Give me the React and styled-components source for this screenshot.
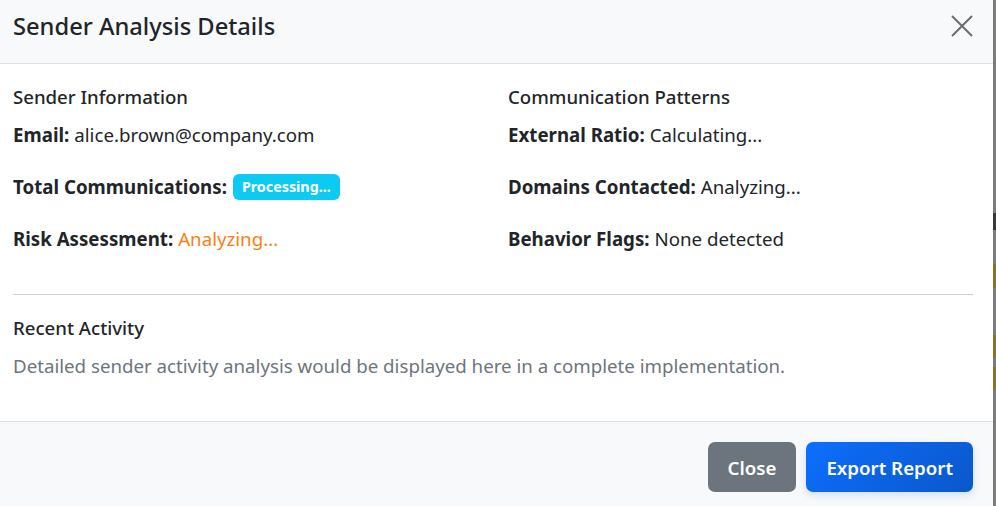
import React from 'react';
import styled, { createGlobalStyle } from 'styled-components';

const GlobalStyle = createGlobalStyle`
    html, body {
        margin: 0;
        padding: 0;
        height: 100%;
        overflow: hidden;
        background: #7a7a7a;
    }
    body {
        font-family: "Noto Sans", "Open Sans", sans-serif;
        color: #212529;
    }
    #root {
        height: 100%;
    }
`;

const Page = styled.div`
    display: flex;
    height: 506px;
`;

const Modal = styled.div`
    width: 993px;
    flex: none;
    background: #fff;
    display: flex;
    flex-direction: column;
    box-shadow: 0 8px 24px rgba(0, 0, 0, 0.2);
`;

const Backdrop = styled.div`
    flex: 1;
    background: #7b7b7b;
    display: flex;
    flex-direction: column;
    padding-top: 213px;
`;

const BackdropMark = styled.div`
    height: ${p => p.h}px;
    margin-top: ${p => p.top}px;
    background: ${p => p.color};
`;

const Header = styled.div`
    height: 64px;
    flex: none;
    display: flex;
    align-items: center;
    justify-content: space-between;
    padding: 0 20px 12px 13px;
    box-sizing: border-box;
    background: #f8f9fa;
    border-bottom: 1px solid #dee2e6;
`;

const Title = styled.h5`
    margin: 0;
    font-size: 23.7px;
    font-weight: 500;
    line-height: 28px;
    color: #212529;
`;

const CloseX = styled.button`
    border: 0;
    background: none;
    padding: 0;
    width: 22px;
    height: 22px;
    display: flex;
    align-items: center;
    justify-content: center;
    cursor: pointer;
`;

const Body = styled.div`
    padding: 21px 20px 41px 13px;
`;

const Columns = styled.div`
    display: grid;
    grid-template-columns: 1fr 1fr;
    column-gap: 30px;
`;

const SectionTitle = styled.h6`
    margin: 0 0 12px;
    font-size: 18.6px;
    font-weight: 500;
    line-height: 24px;
    color: #212529;
`;

const Row = styled.p`
    margin: 0 0 24px;
    font-size: 18.7px;
    line-height: 28px;
    display: flex;
    align-items: center;
    gap: 5px;
    &:last-child {
        margin-bottom: 0;
    }
`;

const Label = styled.strong`
    font-weight: 700;
`;

const Value = styled.span`
    color: ${p => p.color || '#212529'};
`;

const Badge = styled.span`
    display: inline-block;
    background: #0dcaf0;
    color: #fff;
    font-size: 14.3px;
    font-weight: 700;
    line-height: 26px;
    padding: 0 9px;
    border-radius: 6px;
    margin-left: 1px;
`;

const Divider = styled.hr`
    margin: 41px 0 21px;
    border: 0;
    border-top: 1px solid #cfd0d2;
`;

const Muted = styled.p`
    margin: 12px 0 0;
    font-size: 18.7px;
    line-height: 28px;
    color: #6c757d;
`;

const Footer = styled.div`
    flex: 1;
    background: #f8f9fa;
    border-top: 1px solid #dee2e6;
    display: flex;
    justify-content: flex-end;
    align-items: flex-start;
    gap: 10px;
    padding: 20px 20px 0 0;
`;

const Button = styled.button`
    height: 50px;
    border: 0;
    border-radius: 7px;
    padding: 0 20px;
    font-family: inherit;
    font-size: 18.7px;
    font-weight: 600;
    color: #fff;
    cursor: pointer;
    background: ${p => p.primary
        ? 'linear-gradient(135deg, #0d6efd 0%, #0a58ca 100%)'
        : '#6c757d'};
    box-shadow: ${p => p.primary ? '0 3px 8px rgba(13, 110, 253, 0.18)' : 'none'};
`;

const leftRows = [
    { label: 'Email:', value: 'alice.brown@company.com' },
    { label: 'Total Communications:', badge: 'Processing...' },
    { label: 'Risk Assessment:', value: 'Analyzing...', color: '#fd7e14' },
];

const rightRows = [
    { label: 'External Ratio:', value: 'Calculating...' },
    { label: 'Domains Contacted:', value: 'Analyzing...' },
    { label: 'Behavior Flags:', value: 'None detected' },
];

const InfoRow = ({ label, value, badge, color }) => (
    <Row>
        <Label>{label}</Label>
        {badge ? <Badge>{badge}</Badge> : <Value color={color}>{value}</Value>}
    </Row>
);

export default function App() {
    return (
        <Page>
            <GlobalStyle />
            <Modal>
                <Header>
                    <Title>Sender Analysis Details</Title>
                    <CloseX aria-label="Close">
                        <svg width="22" height="22" viewBox="0 0 22 22">
                            <path d="M1 1 L21 21 M21 1 L1 21" stroke="#6d6d6d" strokeWidth="2" />
                        </svg>
                    </CloseX>
                </Header>
                <Body>
                    <Columns>
                        <div>
                            <SectionTitle>Sender Information</SectionTitle>
                            {leftRows.map(r => <InfoRow key={r.label} {...r} />)}
                        </div>
                        <div>
                            <SectionTitle>Communication Patterns</SectionTitle>
                            {rightRows.map(r => <InfoRow key={r.label} {...r} />)}
                        </div>
                    </Columns>
                    <Divider />
                    <SectionTitle>Recent Activity</SectionTitle>
                    <Muted>Detailed sender activity analysis would be displayed here in a complete implementation.</Muted>
                </Body>
                <Footer>
                    <Button>Close</Button>
                    <Button primary>Export Report</Button>
                </Footer>
            </Modal>
            <Backdrop>
                <BackdropMark top={0} h={17} color="#3a3a3a" />
                <BackdropMark top={34} h={24} color="#8a7420" />
                <BackdropMark top={47} h={23} color="#8a7420" />
                <BackdropMark top={9} h={23} color="#8a7420" />
            </Backdrop>
        </Page>
    );
}
